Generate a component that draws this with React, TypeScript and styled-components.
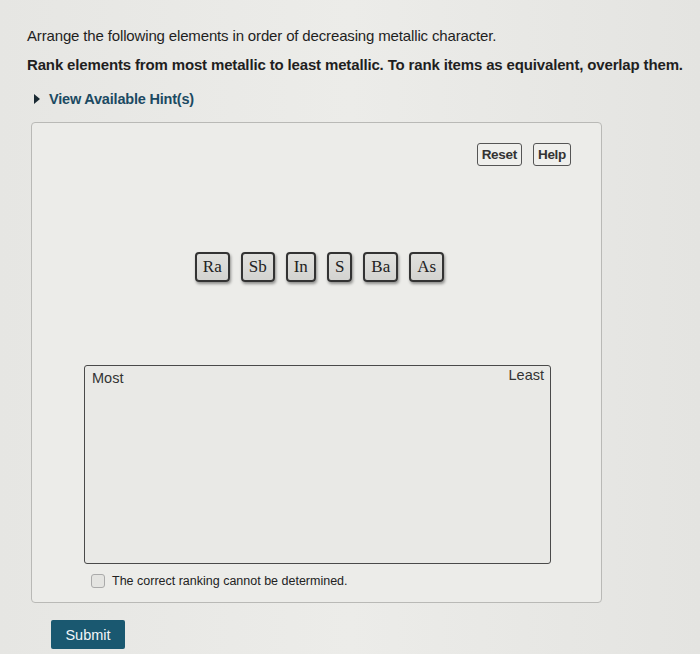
import React, { useState } from 'react';
import styled, { createGlobalStyle } from 'styled-components';

const Global = createGlobalStyle`
  html, body { margin: 0; padding: 0; }
  body {
    background: #e7e7e4;
    font-family: "Liberation Sans", Arial, sans-serif;
    color: #222;
  }
`;

const Page = styled.div`
  width: 700px;
  height: 654px;
  box-sizing: border-box;
  padding: 27px 0 0 27px;
  overflow: hidden;
  background: linear-gradient(90deg, #e6e6e3 0%, #ecece9 50%, #e4e4e1 100%);
`;

const Prompt = styled.p<{ bold?: boolean }>`
  margin: 0 0 11px;
  font-size: 15px;
  line-height: 18px;
  letter-spacing: -0.15px;
  font-weight: ${p => (p.bold ? 700 : 400)};
  color: #1f1f1f;
`;

const Hint = styled.div`
  display: flex;
  align-items: center;
  gap: 9px;
  margin: 17px 0 0 7px;
  font-size: 14.5px;
  font-weight: 700;
  color: #1c4a62;
  letter-spacing: -0.2px;
`;

const Caret = styled.span`
  width: 0;
  height: 0;
  border-top: 5px solid transparent;
  border-bottom: 5px solid transparent;
  border-left: 6px solid #1a2a33;
`;

const Panel = styled.div`
  margin: 15px 0 0 4px;
  width: 571px;
  height: 481px;
  box-sizing: border-box;
  border: 1px solid #b9b9b6;
  border-radius: 4px;
  background: #ecece9;
  padding: 20px 30px 0 0;
  display: flex;
  flex-direction: column;
`;

const Toolbar = styled.div`
  display: flex;
  justify-content: flex-end;
  gap: 11px;
`;

const ToolButton = styled.button`
  height: 23px;
  padding: 0 4px;
  border: 1px solid #555;
  border-radius: 3px;
  background: #efefec;
  font-family: "Liberation Sans", Arial, sans-serif;
  font-weight: 700;
  font-size: 13.5px;
  color: #333;
  letter-spacing: -0.3px;
`;

const Tiles = styled.div`
  margin-top: 86px;
  padding-left: 36px;
  display: flex;
  justify-content: center;
  gap: 11px;
`;

const Tile = styled.div`
  box-sizing: border-box;
  height: 30px;
  padding: 0 6px;
  display: flex;
  align-items: center;
  justify-content: center;
  border: 2px solid #333;
  border-radius: 4px;
  background: linear-gradient(#e1e1de, #d3d3d0);
  font-family: "Liberation Serif", "Times New Roman", serif;
  font-size: 17px;
  color: #222;
  box-shadow: 1px 2px 3px rgba(0, 0, 0, 0.4);
`;

const Ranking = styled.div`
  margin: 83px 0 0 52px;
  width: 467px;
  height: 199px;
  box-sizing: border-box;
  border: 1.5px solid #4a4a4a;
  border-radius: 3px;
  background: #e9e9e6;
  display: flex;
  justify-content: space-between;
  align-items: flex-start;
  padding: 1px 6px 0 7px;
  font-size: 14.5px;
  color: #333;
`;

const End = styled.span<{ lift?: boolean }>`
  margin-top: ${p => (p.lift ? '0' : '3px')};
`;

const CheckRow = styled.label`
  margin: 10px 0 0 59px;
  display: flex;
  align-items: center;
  gap: 7px;
  font-size: 12.5px;
  color: #222;
`;

const Box = styled.span<{ on: boolean }>`
  width: 12px;
  height: 12px;
  border: 1px solid #aaa;
  border-radius: 3px;
  background: ${p => (p.on ? '#1b5a72' : '#e4e4e1')};
`;

const Submit = styled.button`
  margin: 17px 0 0 24px;
  height: 29px;
  width: 74px;
  border: none;
  border-radius: 2px;
  background: #1a5870;
  color: #f2f6f8;
  font-family: "Liberation Sans", Arial, sans-serif;
  font-size: 14.5px;
`;

const elements = ['Ra', 'Sb', 'In', 'S', 'Ba', 'As'];

export default function App() {
  const [checked, setChecked] = useState(false);
  return (
    <Page>
      <Global />
      <Prompt>Arrange the following elements in order of decreasing metallic character.</Prompt>
      <Prompt bold>Rank elements from most metallic to least metallic. To rank items as equivalent, overlap them.</Prompt>
      <Hint>
        <Caret />
        View Available Hint(s)
      </Hint>
      <Panel>
        <Toolbar>
          <ToolButton>Reset</ToolButton>
          <ToolButton>Help</ToolButton>
        </Toolbar>
        <Tiles>
          {elements.map(el => (
            <Tile key={el}>{el}</Tile>
          ))}
        </Tiles>
        <Ranking>
          <End>Most</End>
          <End lift>Least</End>
        </Ranking>
        <CheckRow onClick={() => setChecked(!checked)}>
          <Box on={checked} />
          The correct ranking cannot be determined.
        </CheckRow>
      </Panel>
      <Submit>Submit</Submit>
    </Page>
  );
}
